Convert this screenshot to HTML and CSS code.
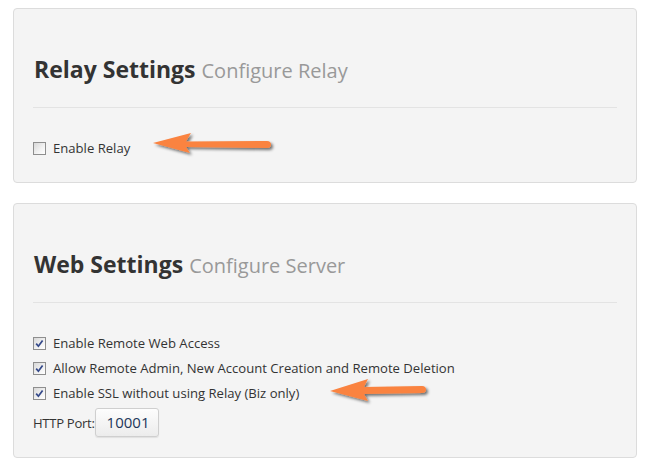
FILE: index.html
```html
<!DOCTYPE html>
<html>
<head>
<meta charset="utf-8">
<link rel="stylesheet" href="styles.css">
</head>
<body>
<div class="page">
  <section class="card">
    <h2 class="card-title">Relay Settings <small>Configure Relay</small></h2>
    <hr class="divider">
    <div class="rows">
      <label class="check-row"><span class="box"></span>Enable Relay</label>
    </div>
  </section>
  <section class="card card-web">
    <h2 class="card-title">Web Settings <small>Configure Server</small></h2>
    <hr class="divider">
    <div class="rows">
      <label class="check-row"><span class="box checked"><svg viewBox="0 0 13 13" width="13" height="13"><path d="M3.2 6.6 L5.4 9.2 L9.6 3.4" fill="none" stroke="#34498a" stroke-width="1.7"/></svg></span>Enable Remote Web Access</label>
      <label class="check-row"><span class="box checked"><svg viewBox="0 0 13 13" width="13" height="13"><path d="M3.2 6.6 L5.4 9.2 L9.6 3.4" fill="none" stroke="#34498a" stroke-width="1.7"/></svg></span>Allow Remote Admin, New Account Creation and Remote Deletion</label>
      <label class="check-row"><span class="box checked"><svg viewBox="0 0 13 13" width="13" height="13"><path d="M3.2 6.6 L5.4 9.2 L9.6 3.4" fill="none" stroke="#34498a" stroke-width="1.7"/></svg></span>Enable SSL without using Relay (Biz only)</label>
      <div class="port-row"><span class="port-label">HTTP Port:</span><span class="port-input">10001</span></div>
    </div>
  </section>
</div>
<svg class="arrow arrow-one" width="130" height="30" viewBox="0 0 130 30">
  <defs>
    <filter id="sh" x="-20%" y="-50%" width="140%" height="200%">
      <feGaussianBlur in="SourceAlpha" stdDeviation="1.5"/>
      <feOffset dx="1.5" dy="2" result="b"/>
      <feComponentTransfer><feFuncA type="linear" slope="0.55"/></feComponentTransfer>
      <feMerge><feMergeNode/><feMergeNode in="SourceGraphic"/></feMerge>
    </filter>
  </defs>
  <path filter="url(#sh)" fill="#fa8340" d="M3 13 L41 3 L36 11.5 L117 11 Q121 11 121 14.5 Q121 18 117 18 L36 17 L40 23 Z"/>
</svg>
<svg class="arrow arrow-two" width="110" height="30" viewBox="0 0 110 30">
  <defs>
    <filter id="sh2" x="-20%" y="-50%" width="140%" height="200%">
      <feGaussianBlur in="SourceAlpha" stdDeviation="1.5"/>
      <feOffset dx="1.5" dy="2" result="b"/>
      <feComponentTransfer><feFuncA type="linear" slope="0.55"/></feComponentTransfer>
      <feMerge><feMergeNode/><feMergeNode in="SourceGraphic"/></feMerge>
    </filter>
  </defs>
  <path filter="url(#sh2)" fill="#fa8340" d="M3 15 L41 3 L37 11 L95 10 Q99 10 99 13.5 Q99 17 95 17 L37 18 L41 25 Z"/>
</svg>
</body>
</html>
```
FILE: styles.css
```css
html, body {
  margin: 0;
  padding: 0;
  background: #ffffff;
}
body {
  font-family: "Open Sans", "Liberation Sans", sans-serif;
  color: #333333;
  position: relative;
  width: 645px;
  height: 467px;
  overflow: hidden;
}
.page {
  padding: 8px 8px 0 13px;
  display: flex;
  flex-direction: column;
  gap: 20px;
}
.card {
  background: #f4f4f4;
  border: 1px solid #dcdcdc;
  border-radius: 4px;
  padding: 48px 19px 24px 19px;
}
.card-web {
  padding-bottom: 20px;
}
.card-title {
  margin: 0 0 0 1px;
  font-size: 23px;
  line-height: 24px;
  font-weight: 700;
  color: #333333;
}
.card-title small {
  font-size: 20px;
  font-weight: 400;
  color: #999999;
}
.divider {
  border: 0;
  border-top: 1px solid #e3e3e3;
  margin: 24px 0 30px 0;
}
.rows {
  display: flex;
  flex-direction: column;
  gap: 5px;
}
.check-row {
  display: flex;
  align-items: center;
  height: 20px;
  font-size: 13.1px;
  color: #333333;
  gap: 7px;
}
.box {
  width: 11px;
  height: 11px;
  border: 1px solid #8e8e8e;
  background: linear-gradient(135deg, #d8d8d8 0%, #f2f2f2 60%, #ffffff 100%);
  position: relative;
  flex: none;
}
.box svg {
  position: absolute;
  left: -1px;
  top: -1px;
}
.port-row {
  display: flex;
  align-items: center;
  height: 29px;
  margin-top: 0;
  font-size: 13.1px;
}
.port-label {
  color: #333333;
  letter-spacing: -0.3px;
}
.port-input {
  box-sizing: border-box;
  width: 64px;
  height: 29px;
  border: 1px solid #cfcfcf;
  border-radius: 3px;
  background: linear-gradient(#fdfdfd, #ececec);
  box-shadow: 0 1px 1px rgba(0,0,0,0.08);
  font-size: 15px;
  line-height: 27px;
  color: #22365a;
  padding-left: 11px;
}
.arrow {
  position: absolute;
}
.arrow-one {
  left: 150px;
  top: 130px;
}
.arrow-two {
  left: 327px;
  top: 376px;
}
```
